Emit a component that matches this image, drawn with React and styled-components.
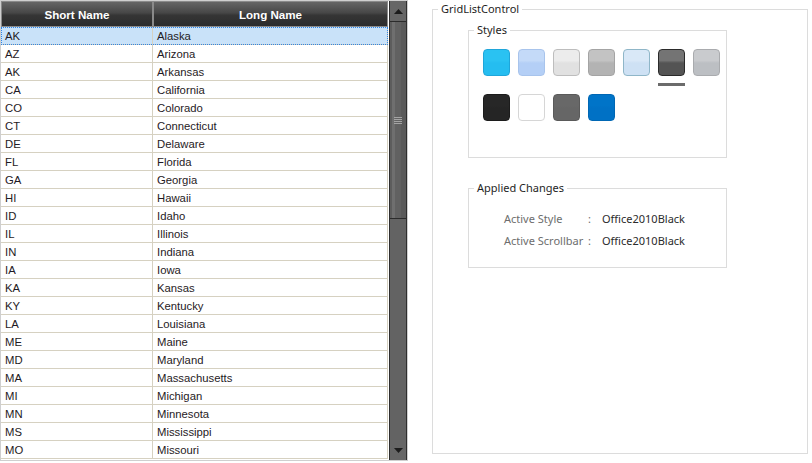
import React from "react";
import styled, { createGlobalStyle } from "styled-components";

const GlobalStyle = createGlobalStyle`
  body {
    margin: 0;
    background: #fff;
    font-family: "Liberation Sans", Arial, sans-serif;
  }
`;

const Page = styled.div`
  display: flex;
  align-items: flex-start;
  gap: 24px;
`;

/* ---------- grid ---------- */

const Grid = styled.div`
  display: flex;
  width: 408px;
  height: 461px;
  box-sizing: border-box;
  border: 1px solid #cfcfcf;
  background: #fff;
`;

const Table = styled.div`
  width: 387px;
  display: flex;
  flex-direction: column;
`;

const Header = styled.div`
  display: flex;
  height: 26px;
`;

const HeaderCell = styled.div`
  width: ${(p) => p.$w}px;
  box-sizing: border-box;
  border: 1px solid #8a8a8a;
  background: linear-gradient(#656565, #474747 45%, #353535 55%, #2c2c2c);
  color: #fff;
  font-weight: bold;
  font-size: 11.6px;
  line-height: 25px;
  text-align: center;
`;

const Row = styled.div`
  display: flex;
  height: 18px;
  box-sizing: border-box;
  border-bottom: 1px solid #d6d1c1;
  background: ${(p) => (p.$selected ? "#c9e2f9" : "#fff")};
  outline: ${(p) => (p.$selected ? "1px dotted #2f86e8" : "none")};
  outline-offset: -1px;
`;

const Cell = styled.div`
  width: ${(p) => p.$w}px;
  box-sizing: border-box;
  padding: 1px 0 0 4px;
  border-right: 1px solid #d6d1c1;
  font-size: 11.3px;
  line-height: 16px;
  color: #1f1a24;
  white-space: nowrap;
`;

const ScrollBar = styled.div`
  width: 18px;
  margin-left: 1px;
  box-sizing: border-box;
  border-left: 1px solid #2e2e2e;
  border-right: 1px solid #2e2e2e;
  background: #646464;
  display: flex;
  flex-direction: column;
`;

const ScrollButton = styled.div`
  height: 20px;
  display: flex;
  align-items: center;
  justify-content: center;
  background: #666;
`;

const Thumb = styled.div`
  height: 196px;
  border-top: 1px solid #2b2b2b;
  border-bottom: 1px solid #2b2b2b;
  background: linear-gradient(
    to right,
    #5d5d5d 0,
    #5d5d5d 2px,
    #6f6f6f 2px,
    #6f6f6f 5px,
    #616161 5px,
    #616161 11px,
    #5a5a5a 11px
  );
  display: flex;
  align-items: center;
  justify-content: center;
`;

const Grip = styled.div`
  width: 8px;
  height: 7px;
  background: repeating-linear-gradient(
    to bottom,
    #a4a4a4 0,
    #a4a4a4 1px,
    transparent 1px,
    transparent 2px
  );
`;

const Track = styled.div`
  flex: 1;
  background: #636363;
`;

const Arrow = ({ down }) => (
  <svg width="9" height="5" viewBox="0 0 9 5">
    <path d={down ? "M0 0 L9 0 L4.5 5 Z" : "M0 5 L9 5 L4.5 0 Z"} fill="#1c1c1c" />
  </svg>
);

/* ---------- right panel ---------- */

const GroupBox = styled.fieldset`
  margin: 0;
  padding: 0;
  box-sizing: border-box;
  border: 1px solid #dcdcdc;
  font-family: "Noto Sans", "Open Sans", sans-serif;
  font-size: 11px;
  color: #1e1e1e;
`;

const Legend = styled.legend`
  margin-left: 5px;
  padding: 0 3px;
  line-height: 18px;
  font-size: 11px;
`;

const MainGroup = styled(GroupBox)`
  width: 376px;
  height: 454px;
`;

const MainBody = styled.div`
  padding: 3px 0 0 35px;
`;

const StylesGroup = styled(GroupBox)`
  width: 259px;
  height: 137px;
`;

const StylesBody = styled.div`
  padding: 10px 0 0 14px;
`;

const SwatchList = styled.div`
  display: grid;
  grid-template-columns: repeat(7, 27px);
  column-gap: 8px;
  row-gap: 8px;
`;

const SwatchCell = styled.div`
  display: flex;
  flex-direction: column;
`;

const Swatch = styled.div`
  width: 27px;
  height: 27px;
  box-sizing: border-box;
  border-radius: 4px;
  border: 1px solid ${(p) => p.$border};
  background: linear-gradient(
    ${(p) => p.$top} 0%,
    ${(p) => p.$top} 42%,
    ${(p) => p.$bottom} 52%,
    ${(p) => p.$bottom} 100%
  );
`;

const Indicator = styled.div`
  height: 3px;
  margin-top: 7px;
  background: ${(p) => (p.$on ? "#6b6b6b" : "transparent")};
`;

const ChangesGroup = styled(GroupBox)`
  width: 259px;
  margin-top: 21px;
`;

const ChangesBody = styled.div`
  padding: 11px 0 15px 35px;
  display: grid;
  grid-template-columns: 84px 14px auto;
  line-height: 22px;
`;

const Label = styled.span`
  color: #6d6d6d;
  white-space: nowrap;
`;

const Value = styled.span`
  color: #2b2b2b;
`;

const states = [
  ["AK", "Alaska"],
  ["AZ", "Arizona"],
  ["AK", "Arkansas"],
  ["CA", "California"],
  ["CO", "Colorado"],
  ["CT", "Connecticut"],
  ["DE", "Delaware"],
  ["FL", "Florida"],
  ["GA", "Georgia"],
  ["HI", "Hawaii"],
  ["ID", "Idaho"],
  ["IL", "Illinois"],
  ["IN", "Indiana"],
  ["IA", "Iowa"],
  ["KA", "Kansas"],
  ["KY", "Kentucky"],
  ["LA", "Louisiana"],
  ["ME", "Maine"],
  ["MD", "Maryland"],
  ["MA", "Massachusetts"],
  ["MI", "Michigan"],
  ["MN", "Minnesota"],
  ["MS", "Mississippi"],
  ["MO", "Missouri"],
];

const swatches = [
  { top: "#2ac2f2", bottom: "#25bdf0", border: "#1fa6da" },
  { top: "#c4daf8", bottom: "#b4cff6", border: "#a8c4ec" },
  { top: "#ececec", bottom: "#e1e1e1", border: "#bdbdbd" },
  { top: "#c3c3c3", bottom: "#b3b3b3", border: "#a4a4a4" },
  { top: "#d9e8f7", bottom: "#cee1f4", border: "#8fb6c8" },
  { top: "#747474", bottom: "#545454", border: "#2a2a2a", active: true },
  { top: "#c9cbce", bottom: "#bcbfc3", border: "#a9abae" },
  { top: "#272727", bottom: "#252525", border: "#1c1c1c" },
  { top: "#ffffff", bottom: "#ffffff", border: "#d6d6d6" },
  { top: "#686868", bottom: "#666666", border: "#5a5a5a" },
  { top: "#0074c8", bottom: "#0071c5", border: "#0067b4" },
];

export default function App() {
  return (
    <>
      <GlobalStyle />
      <Page>
        <Grid>
          <Table>
            <Header>
              <HeaderCell $w={152}>Short Name</HeaderCell>
              <HeaderCell $w={235}>Long Name</HeaderCell>
            </Header>
            {states.map(([s, l], i) => (
              <Row key={i} $selected={i === 0}>
                <Cell $w={152}>{s}</Cell>
                <Cell $w={235}>{l}</Cell>
              </Row>
            ))}
          </Table>
          <ScrollBar>
            <ScrollButton>
              <Arrow />
            </ScrollButton>
            <Thumb>
              <Grip />
            </Thumb>
            <Track />
            <ScrollButton>
              <Arrow down />
            </ScrollButton>
          </ScrollBar>
        </Grid>

        <MainGroup>
          <Legend>GridListControl</Legend>
          <MainBody>
            <StylesGroup>
              <Legend>Styles</Legend>
              <StylesBody>
                <SwatchList>
                  {swatches.map((c, i) => (
                    <SwatchCell key={i}>
                      <Swatch $top={c.top} $bottom={c.bottom} $border={c.border} />
                      {i < 7 && <Indicator $on={c.active} />}
                    </SwatchCell>
                  ))}
                </SwatchList>
              </StylesBody>
            </StylesGroup>

            <ChangesGroup>
              <Legend>Applied Changes</Legend>
              <ChangesBody>
                <Label>Active Style</Label>
                <Label>:</Label>
                <Value>Office2010Black</Value>
                <Label>Active Scrollbar</Label>
                <Label>:</Label>
                <Value>Office2010Black</Value>
              </ChangesBody>
            </ChangesGroup>
          </MainBody>
        </MainGroup>
      </Page>
    </>
  );
}
